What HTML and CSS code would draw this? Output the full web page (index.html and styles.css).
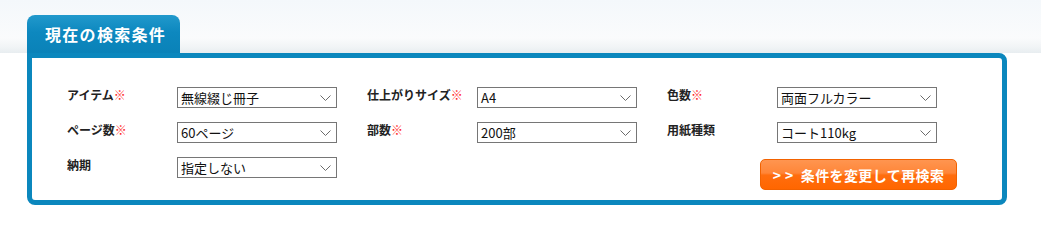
FILE: index.html
```html
<!DOCTYPE html>
<html lang="ja">
<head>
<meta charset="utf-8">
<title>現在の検索条件</title>
<link rel="stylesheet" href="styles.css">
</head>
<body>
<div class="page">
  <div class="tab">現在の検索条件</div>
  <div class="box">
    <div class="grid">
      <div class="label first">アイテム<span class="req">※</span></div>
      <div class="field"><div class="select"><span>無線綴じ冊子</span><svg class="chev" width="11" height="6" viewBox="0 0 11 6"><path d="M0.5 0.5 L5.5 5.5 L10.5 0.5" fill="none" stroke="#6b6b6b" stroke-width="1"/></svg></div></div>
      <div class="label">仕上がりサイズ<span class="req">※</span></div>
      <div class="field"><div class="select"><span>A4</span><svg class="chev" width="11" height="6" viewBox="0 0 11 6"><path d="M0.5 0.5 L5.5 5.5 L10.5 0.5" fill="none" stroke="#6b6b6b" stroke-width="1"/></svg></div></div>
      <div class="label">色数<span class="req">※</span></div>
      <div class="field"><div class="select"><span>両面フルカラー</span><svg class="chev" width="11" height="6" viewBox="0 0 11 6"><path d="M0.5 0.5 L5.5 5.5 L10.5 0.5" fill="none" stroke="#6b6b6b" stroke-width="1"/></svg></div></div>

      <div class="label first">ページ数<span class="req">※</span></div>
      <div class="field"><div class="select"><span>60ページ</span><svg class="chev" width="11" height="6" viewBox="0 0 11 6"><path d="M0.5 0.5 L5.5 5.5 L10.5 0.5" fill="none" stroke="#6b6b6b" stroke-width="1"/></svg></div></div>
      <div class="label">部数<span class="req">※</span></div>
      <div class="field"><div class="select"><span>200部</span><svg class="chev" width="11" height="6" viewBox="0 0 11 6"><path d="M0.5 0.5 L5.5 5.5 L10.5 0.5" fill="none" stroke="#6b6b6b" stroke-width="1"/></svg></div></div>
      <div class="label">用紙種類</div>
      <div class="field"><div class="select"><span>コート110kg</span><svg class="chev" width="11" height="6" viewBox="0 0 11 6"><path d="M0.5 0.5 L5.5 5.5 L10.5 0.5" fill="none" stroke="#6b6b6b" stroke-width="1"/></svg></div></div>

      <div class="label first">納期</div>
      <div class="field"><div class="select"><span>指定しない</span><svg class="chev" width="11" height="6" viewBox="0 0 11 6"><path d="M0.5 0.5 L5.5 5.5 L10.5 0.5" fill="none" stroke="#6b6b6b" stroke-width="1"/></svg></div></div>
      <button class="btn" type="button"><span class="arrows">&gt;&gt;</span> 条件を変更して再検索</button>
    </div>
  </div>
</div>
</body>
</html>
```
FILE: styles.css
```css
html, body {
  margin: 0;
  padding: 0;
  background: #ffffff;
}
body {
  font-family: "Noto Sans CJK JP", "Noto Sans", sans-serif;
}
.page {
  width: 1041px;
  height: 223px;
  box-sizing: border-box;
  overflow: hidden;
  padding: 15px 0 0 27px;
  background: linear-gradient(to bottom, #f4f8fb 0px, #fafbfc 38px, #f1f4f6 47px, #e8edf0 53px, #ffffff 53px, #ffffff 100%);
}
.tab {
  width: 153px;
  height: 38px;
  box-sizing: border-box;
  padding-left: 18px;
  border-radius: 8px 8px 0 0;
  background: linear-gradient(to bottom, #2199cc 0%, #0d88bf 45%, #0a82b8 100%);
  color: #ffffff;
  font-weight: bold;
  font-size: 16px;
  letter-spacing: 1.3px;
  line-height: 38px;
}
.box {
  width: 980px;
  box-sizing: border-box;
  border: 5px solid #0b87bd;
  border-radius: 0 8px 8px 8px;
  background: #ffffff;
  padding: 29px 0 10px 35px;
}
.grid {
  display: grid;
  grid-template-columns: 110px 190px 110px 190px 110px 160px 20px;
  row-gap: 14px;
  align-items: start;
}
.label {
  font-size: 12px;
  line-height: 14px;
  padding-top: 1px;
  font-weight: bold;
  color: #222222;
  white-space: nowrap;
}
.label.first {
  grid-column: 1;
}
.req {
  color: #ff1f1f;
  font-weight: normal;
}
.select {
  width: 160px;
  height: 21px;
  box-sizing: border-box;
  border: 1px solid #767676;
  background: #ffffff;
  display: flex;
  align-items: center;
  justify-content: space-between;
  padding: 0 5px 0 3px;
  font-size: 13px;
  color: #111111;
  line-height: 19px;
  white-space: nowrap;
}
.select span {
  padding-bottom: 1px;
}
.chev {
  display: block;
}
.btn {
  grid-column: 5 / 8;
  justify-self: end;
  margin-top: 2px;
  width: 197px;
  height: 31px;
  border: 1px solid #f26200;
  border-radius: 5px;
  background: linear-gradient(to bottom, #ff9550 0%, #ff8638 45%, #ff6d0e 52%, #ff6600 100%);
  color: #ffffff;
  font-family: "Noto Sans CJK JP", "Noto Sans", sans-serif;
  font-weight: bold;
  font-size: 14px;
  letter-spacing: 0.4px;
  padding: 0;
  cursor: pointer;
}
.arrows {
  letter-spacing: 4px;
}
```
